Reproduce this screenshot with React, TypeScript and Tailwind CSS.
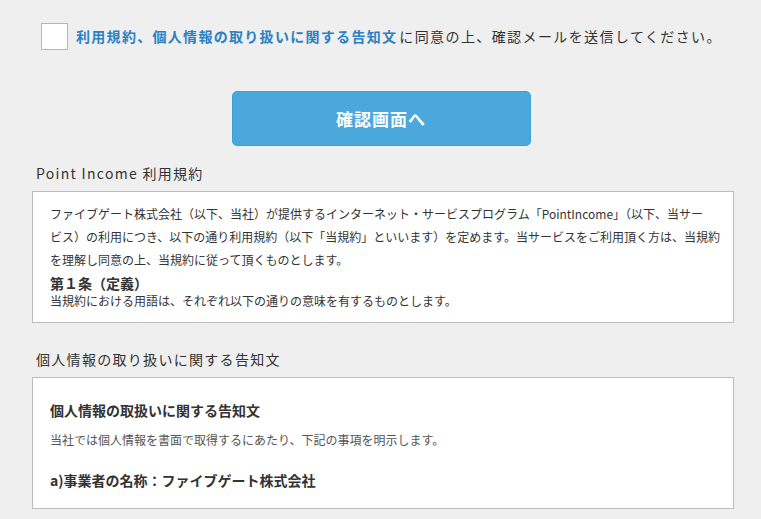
import React from "react";

const font = {
  fontFamily: '"Noto Sans CJK JP", "Noto Sans", sans-serif',
};

const Agreement = () => (
  <div className="flex items-center pl-[41px] pt-[23px]">
    <span className="w-[27px] h-[27px] bg-white border border-[#b5b5b5] shrink-0" />
    <p className="ml-[8px] text-[14px] tracking-[1.4px] text-[#333] whitespace-nowrap leading-[27px]">
      <a className="text-[#2b7fc2] font-bold text-[14px] tracking-[1.3px] mr-[2px]">
        利用規約、個人情報の取り扱いに関する告知文
      </a>
      に同意の上、確認メールを送信してください。
    </p>
  </div>
);

const SectionTitle = ({ children }: { children: React.ReactNode }) => (
  <h2 className="pl-[36px] text-[14px] tracking-[1.3px] text-[#333] leading-[20px]">{children}</h2>
);

export default function App() {
  return (
    <div className="w-[761px] h-[519px] overflow-hidden bg-[#efefef]" style={font}>
      <Agreement />
      <div className="flex justify-center pt-[41px] pl-[1px]">
        <button className="w-[299px] h-[55px] rounded-[5px] bg-[#4aa8dd] border border-[#3f9fd6] text-white font-bold text-[17px] tracking-[1px]">
          確認画面へ
        </button>
      </div>

      <div className="mt-[17px]">
        <SectionTitle>Point Income 利用規約</SectionTitle>
      </div>
      <div className="mx-[32px] mt-[8px] w-[702px] h-[132px] bg-white border border-[#bcbcbc] pl-[17px] pt-[10px] text-[#333]">
        <p className="text-[12px] leading-[23px] whitespace-nowrap">
          ファイブゲート株式会社（以下、当社）が提供するインターネット・サービスプログラム「PointIncome」（以下、当サー
          <br />
          ビス）の利用につき、以下の通り利用規約（以下「当規約」といいます）を定めます。当サービスをご利用頂く方は、当規約
          <br />
          を理解し同意の上、当規約に従って頂くものとします。
        </p>
        <h3 className="mt-[2px] text-[14px] font-bold leading-[20px]">第１条（定義）</h3>
        <p className="text-[12px] leading-[16px]">
          当規約における用語は、それぞれ以下の通りの意味を有するものとします。
        </p>
      </div>

      <div className="mt-[26px]">
        <SectionTitle>個人情報の取り扱いに関する告知文</SectionTitle>
      </div>
      <div className="mx-[32px] mt-[8px] w-[702px] h-[132px] bg-white border border-[#bcbcbc] pl-[17px] pt-[22px] text-[#333]">
        <h3 className="text-[14px] font-bold leading-[20px]">個人情報の取扱いに関する告知文</h3>
        <p className="mt-[10px] text-[12px] leading-[20px] text-[#555]">
          当社では個人情報を書面で取得するにあたり、下記の事項を明示します。
        </p>
        <h3 className="mt-[20px] text-[14px] font-bold leading-[20px]">a)事業者の名称：ファイブゲート株式会社</h3>
      </div>
    </div>
  );
}
